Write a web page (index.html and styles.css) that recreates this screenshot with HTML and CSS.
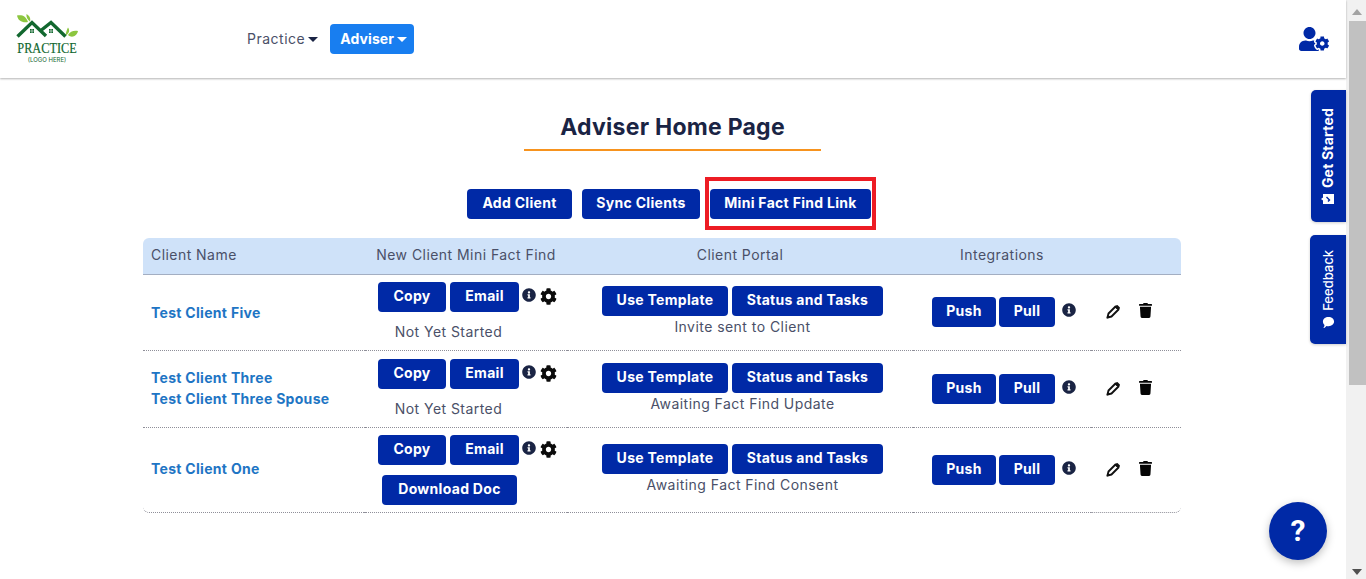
FILE: index.html
```html
<!doctype html>
<html lang="en">
<head>
  <meta charset="UTF-8">
  <meta name="viewport" content="width=device-width, initial-scale=1.0">
  <title>Adviser Home Page</title>
  <link rel="stylesheet" href="styles.css">
</head>
<body>
  <svg class="icon-defs" aria-hidden="true">
    <symbol id="i-info" viewBox="0 0 512 512"><path d="M256 8C119.043 8 8 119.083 8 256c0 136.997 111.043 248 248 248s248-111.003 248-248C504 119.083 392.957 8 256 8zm0 110c23.196 0 42 18.804 42 42s-18.804 42-42 42-42-18.804-42-42 18.804-42 42-42zm56 254c0 6.627-5.373 12-12 12h-88c-6.627 0-12-5.373-12-12v-24c0-6.627 5.373-12 12-12h12v-64h-12c-6.627 0-12-5.373-12-12v-24c0-6.627 5.373-12 12-12h64c6.627 0 12 5.373 12 12v100h12c6.627 0 12 5.373 12 12v24z"/></symbol>
    <symbol id="i-cog" viewBox="0 0 512 512"><path d="M487.4 315.7l-42.6-24.6c4.3-23.2 4.3-47 0-70.2l42.6-24.6c4.9-2.8 7.1-8.6 5.5-14-11.1-35.6-30-67.8-54.7-94.6-3.8-4.1-10-5.1-14.8-2.3L380.8 110c-17.9-15.4-38.5-27.3-60.8-35.1V25.8c0-5.6-3.9-10.5-9.4-11.7-36.7-8.2-74.3-7.8-109.2 0-5.5 1.2-9.4 6.1-9.4 11.7V75c-22.2 7.9-42.8 19.8-60.8 35.1L88.7 85.5c-4.9-2.8-11-1.9-14.8 2.3-24.7 26.7-43.6 58.9-54.7 94.6-1.7 5.4.6 11.2 5.5 14L67.3 221c-4.3 23.2-4.3 47 0 70.2l-42.6 24.6c-4.9 2.8-7.1 8.6-5.5 14 11.1 35.6 30 67.8 54.7 94.6 3.8 4.1 10 5.1 14.8 2.3l42.6-24.6c17.9 15.4 38.5 27.3 60.8 35.1v49.2c0 5.6 3.9 10.5 9.4 11.7 36.7 8.2 74.3 7.8 109.2 0 5.5-1.2 9.4-6.1 9.4-11.7v-49.2c22.2-7.9 42.8-19.8 60.8-35.1l42.6 24.6c4.9 2.8 11 1.9 14.8-2.3 24.7-26.7 43.6-58.9 54.7-94.6 1.5-5.5-.7-11.3-5.6-14.1zM256 336c-44.1 0-80-35.9-80-80s35.9-80 80-80 80 35.9 80 80-35.9 80-80 80z"/></symbol>
    <symbol id="i-pencil" viewBox="0 0 14 14"><path d="M1.500 12.500l1-4L9.500 1.500l3 3-7 7z" fill="#fff" stroke="#111" stroke-width="1.900" stroke-linejoin="round"/><path d="M8.800 1.800L10.500 .3a1 1 0 0 1 1.200 0l2 2a1 1 0 0 1 0 1.200l-1.500 1.700z" fill="#111"/><path d="M.6 13.400l.6-3.200 2.600 2.600z" fill="#111"/></symbol>
    <symbol id="i-trash" viewBox="0 0 448 512"><path d="M432 32H312l-9.400-18.700A24 24 0 0 0 281.100 0H166.800a23.720 23.720 0 0 0-21.400 13.300L136 32H16A16 16 0 0 0 0 48v32a16 16 0 0 0 16 16h416a16 16 0 0 0 16-16V48a16 16 0 0 0-16-16zM53.200 467a48 48 0 0 0 47.900 45h245.800a48 48 0 0 0 47.900-45L416 128H32z"/></symbol>
  </svg>

  <div class="app">
    <div class="page">
      <header class="topbar">
        <!-- placeholder logo -->
        <svg class="logo" viewBox="0 0 64 50" aria-label="Practice logo">
          <path class="leaf" d="M2 1.500c5-1 9 .5 11 6.500-5.500 1-10-1-11-6.500zM11.500 0c3 1.500 4.500 4.500 3.500 7.500-2.500-1.500-4-4.500-3.500-7.500zM50.500 21.500c.5-3.500 1.500-6 2.500-8 2 2.500 1.500 6-2.500 8zM53 21c2-3.500 6-5 10-4-1 5-6 7.500-10 4z"/>
          <path class="roof-line" d="M2.500 22.500L17 8.500l14 13.500M26.500 16L36 8.500l14.500 14"/>
          <path class="roof" d="M15 15h1.700v1.700H15zM17.300 15H19v1.700h-1.700zM15 17.300h1.700V19H15zM17.300 17.300H19V19h-1.700zM34 15h1.700v1.700H34zM36.300 15H38v1.700h-1.700zM34 17.300h1.700V19H34zM36.300 17.300H38V19h-1.700z"/>
          <text class="logo-name" text-anchor="middle" transform="translate(32 38.500) scale(.82 1)">PRACTICE</text>
          <text class="logo-sub" text-anchor="middle" transform="translate(32 47.500) scale(1 1)">(LOGO HERE)</text>
        </svg>
        <nav class="nav">
          <a class="nav-link">Practice<span class="caret"></span></a>
          <a class="nav-link nav-link-active">Adviser<span class="caret"></span></a>
        </nav>
        <svg class="user-icon" viewBox="0 0 640 512"><path d="M610.500 373.300c2.600-14.100 2.600-28.500 0-42.600l25.800-14.900c3-1.700 4.300-5.200 3.300-8.500-6.700-21.600-18.200-41.200-33.200-57.400-2.300-2.500-6-3.100-9-1.400l-25.800 14.900c-10.900-9.300-23.400-16.500-36.900-21.300v-29.800c0-3.400-2.400-6.400-5.700-7.100-22.300-5-45-4.800-66.200 0-3.300.7-5.700 3.700-5.700 7.100v29.800c-13.500 4.800-26 12-36.900 21.300l-25.800-14.900c-2.900-1.700-6.700-1.100-9 1.400-15 16.200-26.500 35.800-33.200 57.400-1 3.300.4 6.800 3.300 8.500l25.800 14.900c-2.600 14.100-2.600 28.500 0 42.600l-25.800 14.900c-3 1.700-4.300 5.200-3.300 8.500 6.700 21.600 18.200 41.100 33.200 57.400 2.300 2.500 6 3.100 9 1.400l25.800-14.900c10.900 9.300 23.400 16.500 36.900 21.300v29.800c0 3.400 2.400 6.400 5.700 7.100 22.300 5 45 4.800 66.200 0 3.300-.7 5.700-3.700 5.700-7.100v-29.800c13.500-4.800 26-12 36.900-21.300l25.800 14.900c2.900 1.700 6.700 1.100 9-1.400 15-16.200 26.500-35.800 33.200-57.400 1-3.300-.4-6.800-3.300-8.500l-25.800-14.900zM496 400.500c-26.800 0-48.500-21.800-48.500-48.500s21.800-48.500 48.500-48.500 48.500 21.800 48.500 48.500-21.700 48.500-48.500 48.500zM224 256c70.700 0 128-57.300 128-128S294.700 0 224 0 96 57.300 96 128s57.300 128 128 128zm201.200 226.500c-2.300-1.200-4.600-2.600-6.800-3.900l-7.900 4.600c-6 3.400-12.800 5.300-19.600 5.300-10.900 0-21.400-4.600-28.900-12.600-18.300-19.800-32.300-43.900-40.200-69.600-5.500-17.700 1.900-36.400 17.900-45.700l7.900-4.600c-.1-2.600-.1-5.200 0-7.800l-7.900-4.600c-16-9.200-23.400-28-17.900-45.700.9-2.900 2.200-5.800 3.200-8.700-3.800-.3-7.500-1.200-11.400-1.200h-16.700c-22.200 10.200-46.900 16-72.900 16s-50.600-5.800-72.900-16h-16.700C60.200 288 0 348.200 0 422.400V464c0 26.500 21.500 48 48 48h352c10.100 0 19.500-3.200 27.200-8.500-1.200-3.800-2-7.700-2-11.800v-9.200z"/></svg>
      </header>

      <main class="content">
        <h1 class="title">Adviser Home Page</h1>

        <div class="top-actions">
          <button class="btn w-add">Add Client</button>
          <button class="btn w-sync">Sync Clients</button>
          <div class="highlight"><button class="btn w-mini">Mini Fact Find Link</button></div>
        </div>

        <table class="clients">
          <colgroup>
            <col class="col-name"><col class="col-mff"><col class="col-portal"><col class="col-int"><col>
          </colgroup>
          <thead>
            <tr>
              <th class="th-name">Client Name</th>
              <th>New Client Mini Fact Find</th>
              <th>Client Portal</th>
              <th>Integrations</th>
              <th></th>
            </tr>
          </thead>
          <tbody>
            <tr class="row-1">
              <td class="name"><a>Test Client Five</a></td>
              <td>
                <div class="mff">
                  <div class="mff-main">
                    <div class="btn-pair"><button class="btn w-copy">Copy</button><button class="btn w-email">Email</button></div>
                    <div class="status status-gap">Not Yet Started</div>
                  </div>
                  <svg class="ic-info"><use href="#i-info"/></svg>
                  <svg class="ic-cog"><use href="#i-cog"/></svg>
                </div>
              </td>
              <td>
                <div class="portal">
                  <div class="btn-pair"><button class="btn w-tpl">Use Template</button><button class="btn w-tasks">Status and Tasks</button></div>
                  <div class="status">Invite sent to Client</div>
                </div>
              </td>
              <td>
                <div class="integ">
                  <div class="btn-pair"><button class="btn w-push">Push</button><button class="btn w-pull">Pull</button></div>
                  <svg class="ic-info"><use href="#i-info"/></svg>
                </div>
              </td>
              <td>
                <div class="row-icons">
                  <svg class="ic-pencil"><use href="#i-pencil"/></svg>
                  <svg class="ic-trash"><use href="#i-trash"/></svg>
                </div>
              </td>
            </tr>
            <tr class="row-2">
              <td class="name"><a>Test Client Three</a><a>Test Client Three Spouse</a></td>
              <td>
                <div class="mff">
                  <div class="mff-main">
                    <div class="btn-pair"><button class="btn w-copy">Copy</button><button class="btn w-email">Email</button></div>
                    <div class="status status-gap">Not Yet Started</div>
                  </div>
                  <svg class="ic-info"><use href="#i-info"/></svg>
                  <svg class="ic-cog"><use href="#i-cog"/></svg>
                </div>
              </td>
              <td>
                <div class="portal">
                  <div class="btn-pair"><button class="btn w-tpl">Use Template</button><button class="btn w-tasks">Status and Tasks</button></div>
                  <div class="status">Awaiting Fact Find Update</div>
                </div>
              </td>
              <td>
                <div class="integ">
                  <div class="btn-pair"><button class="btn w-push">Push</button><button class="btn w-pull">Pull</button></div>
                  <svg class="ic-info"><use href="#i-info"/></svg>
                </div>
              </td>
              <td>
                <div class="row-icons">
                  <svg class="ic-pencil"><use href="#i-pencil"/></svg>
                  <svg class="ic-trash"><use href="#i-trash"/></svg>
                </div>
              </td>
            </tr>
            <tr class="row-3">
              <td class="name"><a>Test Client One</a></td>
              <td>
                <div class="mff">
                  <div class="mff-main">
                    <div class="btn-pair"><button class="btn w-copy">Copy</button><button class="btn w-email">Email</button></div>
                    <button class="btn w-doc">Download Doc</button>
                  </div>
                  <svg class="ic-info"><use href="#i-info"/></svg>
                  <svg class="ic-cog"><use href="#i-cog"/></svg>
                </div>
              </td>
              <td>
                <div class="portal">
                  <div class="btn-pair"><button class="btn w-tpl">Use Template</button><button class="btn w-tasks">Status and Tasks</button></div>
                  <div class="status">Awaiting Fact Find Consent</div>
                </div>
              </td>
              <td>
                <div class="integ">
                  <div class="btn-pair"><button class="btn w-push">Push</button><button class="btn w-pull">Pull</button></div>
                  <svg class="ic-info"><use href="#i-info"/></svg>
                </div>
              </td>
              <td>
                <div class="row-icons">
                  <svg class="ic-pencil"><use href="#i-pencil"/></svg>
                  <svg class="ic-trash"><use href="#i-trash"/></svg>
                </div>
              </td>
            </tr>
          </tbody>
        </table>
      </main>

      <!-- floating tabs and help button -->
      <a class="side-tab tab-started">
        <span class="tab-label">Get Started</span>
        <svg class="tab-icon icon-ticket" viewBox="0 0 13 10"><path d="M2 0h11v10H2V6.500L0 5l2-1.500zM6 2.500L5 3.500l2.500 2.500-1 1 1 1 2-2z" fill-rule="evenodd"/></svg>
      </a>
      <a class="side-tab tab-feedback">
        <span class="tab-label">Feedback</span>
        <svg class="tab-icon" viewBox="0 0 14 14"><path d="M7 1c3.500 0 6 2.200 6 5s-2.500 5-6 5c-.8 0-1.500-.1-2.200-.3C3.800 11.600 2.600 13 1.500 13c.8-1 1.200-2 1.200-3.200C1.700 8.900 1 7.500 1 6c0-2.800 2.500-5 6-5z"/></svg>
      </a>
      <a class="help">?</a>
    </div>

    <div class="scrollbar">
      <span class="arrow arrow-up"></span>
      <div class="thumb"></div>
      <span class="arrow arrow-down"></span>
    </div>
  </div>
</body>
</html>
```

FILE: styles.css
```css
* {
  box-sizing: border-box;
}
html, body {
  margin: 0;
  height: 100%;
  overflow: hidden;
}
body {
  font-family: 'Inter', 'Liberation Sans', sans-serif;
  font-size: 14px;
  color: #4a5068;
  background: #fff;
}
.icon-defs {
  display: none;
}
.app {
  display: flex;
  height: 579px;
}
.page {
  position: relative;
  flex: 1;
  min-width: 0;
}

/* top bar */
.topbar {
  display: flex;
  align-items: center;
  height: 78px;
  padding: 0 17px 0 15px;
  box-shadow: 0 1px 2px rgba(0,0,0,0.3);
}
.logo {
  width: 64px;
  height: 50px;
  margin-top: -1px;
  overflow: visible;
}
.leaf {
  fill: #8cc63f;
}
.roof {
  fill: #12682f;
}
.roof-line {
  fill: none;
  stroke: #12682f;
  stroke-width: 3.4;
}
.logo-name {
  font-family: 'Liberation Serif', serif;
  font-size: 15px;
  font-weight: 400;
  stroke: #12682f;
  stroke-width: 0.2;
  fill: #12682f;
}
.logo-sub {
  font-family: 'Inter', sans-serif;
  font-size: 6px;
  fill: #12682f;
}
.nav {
  display: flex;
  align-items: center;
  gap: 4px;
  margin-left: 160px;
  flex: 1;
}
.nav-link {
  display: flex;
  align-items: center;
  height: 30px;
  padding: 0 8px 2px;
  border-radius: 4px;
  font-size: 14px;
  letter-spacing: 0.5px;
  color: #4a5068;
}
.nav-link-active {
  padding: 0 7px 2px 10px;
  background: #187ef0;
  color: #fff;
  font-weight: 700;
  letter-spacing: 0.1px;
}
.caret {
  width: 0;
  height: 0;
  margin: 2px 0 0 3px;
  border-top: 5px solid currentColor;
  border-left: 5px solid transparent;
  border-right: 5px solid transparent;
}
.nav-link:first-child .caret {
  color: #1a2444;
}
.user-icon {
  width: 30px;
  height: 24px;
  fill: #0029a6;
}

/* main */
.content {
  display: flex;
  flex-direction: column;
  align-items: center;
}
.title {
  width: 297px;
  margin: 33px 0 0 -1px;
  padding-bottom: 6px;
  border-bottom: 2px solid #f7931e;
  text-align: center;
  font-size: 23px;
  line-height: 32px;
  font-weight: 700;
  letter-spacing: 0.25px;
  white-space: nowrap;
  color: #1a2444;
}
.top-actions {
  display: flex;
  align-items: center;
  gap: 10px;
  margin: 26px 0 8px -3px;
}
.highlight {
  margin-left: -5px;
  padding: 8px 1px 7px;
  border: 4px solid #ed1c24;
}
.btn {
  height: 30px;
  padding: 0 0 3px;
  border: none;
  border-radius: 4px;
  background: #0029a6;
  color: #fff;
  font-family: inherit;
  font-size: 14px;
  font-weight: 700;
  letter-spacing: 0.3px;
}
.w-add { width: 105px; }
.w-sync { width: 118px; }
.w-mini { width: 161px; display: block; }
.w-copy { width: 68px; }
.w-email { width: 69px; }
.w-doc { width: 135px; display: block; margin: 10px 0 0 4px; }
.w-tpl { width: 126px; }
.w-tasks { width: 151px; }
.w-push { width: 64px; }
.w-pull { width: 56px; }

/* table */
.clients {
  width: 1038px;
  margin-left: -22px;
  table-layout: fixed;
  border-collapse: separate;
  border-spacing: 0;
}
.col-name { width: 222px; }
.col-mff { width: 202px; }
.col-portal { width: 346px; }
.col-int { width: 178px; }
.clients th {
  height: 37px;
  padding: 0 0 4px;
  background: #cfe2f9;
  border-bottom: 1px solid #a3aec2;
  font-size: 14px;
  font-weight: 400;
  letter-spacing: 0.45px;
  color: #4a5068;
}
.clients th:first-child {
  border-top-left-radius: 6px;
}
.clients th:last-child {
  border-top-right-radius: 6px;
}
.clients .th-name {
  padding-left: 8px;
  text-align: left;
}
.clients td {
  padding: 0;
  border-bottom: 1px dotted #8f8f99;
  vertical-align: middle;
}
.clients tr:last-child td:first-child {
  border-bottom-left-radius: 6px;
}
.clients tr:last-child td:last-child {
  border-bottom-right-radius: 6px;
}
.row-1 td { height: 76px; }
.row-2 td { height: 77px; }
.row-3 td { height: 85px; }
.clients .row-1 td {
  padding-bottom: 1px;
}
.clients .name {
  padding-left: 8px;
}
.clients .row-2 .name {
  padding-bottom: 2px;
}
.clients .row-3 .name {
  padding-bottom: 3px;
}
.name a {
  display: block;
  font-weight: 700;
  line-height: 21px;
  letter-spacing: 0.3px;
  color: #1e75c4;
}
.btn-pair {
  display: flex;
  gap: 4px;
}
.status {
  height: 20px;
  line-height: 20px;
  text-align: center;
  letter-spacing: 0.45px;
  white-space: nowrap;
}
.status-gap {
  margin-top: 10px;
}
.mff {
  display: flex;
  align-items: flex-start;
  padding-left: 13px;
}
.ic-info {
  width: 14px;
  height: 14px;
  fill: #1a2444;
}
.mff .ic-info {
  margin: 6px 0 0 3px;
}
.ic-cog {
  width: 17px;
  height: 17px;
  margin: 6px 0 0 4px;
  fill: #0b0b0b;
}
.portal {
  width: 281px;
  margin: -2px 0 0 35px;
}
.portal .status {
  line-height: 22px;
}
.integ {
  display: flex;
  align-items: flex-start;
  padding-left: 19px;
}
.integ .btn-pair {
  gap: 3px;
}
.integ .ic-info {
  margin: 6px 0 0 7px;
}
.row-icons {
  display: flex;
  align-items: center;
  margin-bottom: 3px;
  padding-left: 15px;
}
.ic-pencil {
  width: 14px;
  height: 14px;
  margin-top: 2px;
}
.ic-trash {
  width: 13px;
  height: 15px;
  margin-left: 19px;
  fill: #050505;
}

/* floating things */
.side-tab {
  position: absolute;
  right: 0;
  display: flex;
  flex-direction: column;
  align-items: center;
  justify-content: center;
  gap: 6px;
  background: #0029a6;
  color: #fff;
  border-radius: 5px 0 0 5px;
  box-shadow: 0 1px 3px rgba(0,0,0,0.2);
}
.tab-started {
  top: 90px;
  width: 35px;
  height: 132px;
  padding-right: 2px;
}
.tab-feedback {
  top: 235px;
  width: 36px;
  height: 109px;
}
.tab-label {
  writing-mode: vertical-rl;
  transform: rotate(180deg);
  font-size: 13px;
  font-weight: 700;
}
.tab-started .tab-label {
  font-size: 14px;
  letter-spacing: 0.2px;
}
.tab-feedback .tab-label {
  font-weight: 500;
}
.tab-icon {
  width: 13px;
  height: 13px;
  fill: #fff;
}
.icon-ticket {
  height: 10px;
}
.help {
  position: absolute;
  left: 1269px;
  top: 502px;
  width: 58px;
  height: 58px;
  border-radius: 50%;
  background: #0029a6;
  box-shadow: 0 3px 8px rgba(0,0,0,0.25);
  color: #fff;
  font-family: 'Roboto', sans-serif;
  font-size: 30px;
  font-weight: 700;
  line-height: 58px;
  text-align: center;
}

/* scrollbar */
.scrollbar {
  display: flex;
  flex-direction: column;
  align-items: center;
  width: 20px;
  background: #f1f1f1;
  padding-left: 2px;
}
.thumb {
  width: 17px;
  height: 364px;
  margin-top: 6px;
  background: #c1c1c1;
}
.arrow {
  width: 0;
  height: 0;
  border-left: 5px solid transparent;
  border-right: 5px solid transparent;
}
.arrow-up {
  margin-top: 9px;
  border-bottom: 6px solid #a3a3a3;
}
.arrow-down {
  margin-top: auto;
  margin-bottom: 4px;
  border-top: 6px solid #505050;
}
```
